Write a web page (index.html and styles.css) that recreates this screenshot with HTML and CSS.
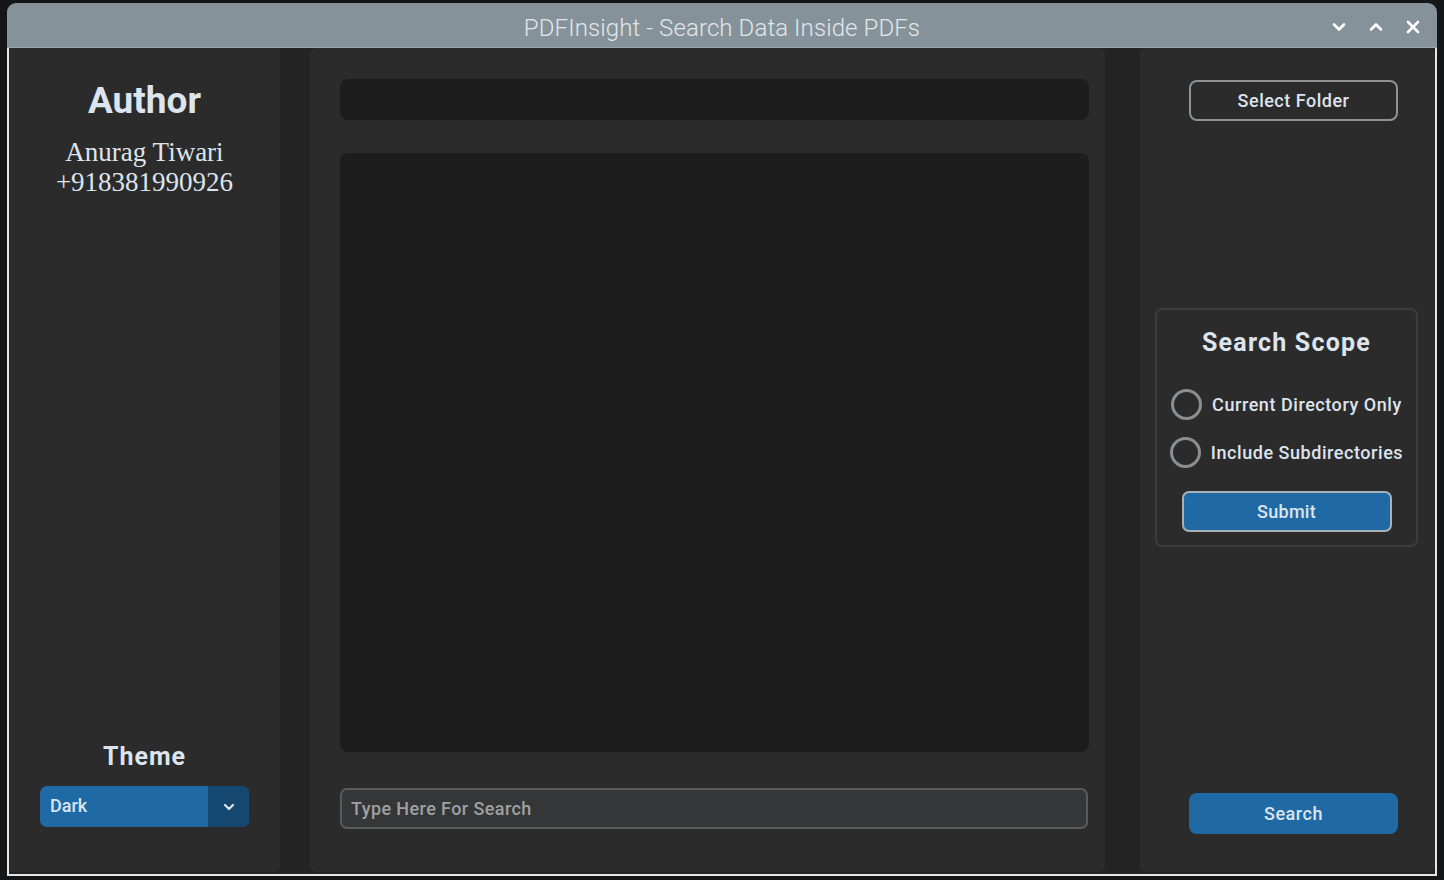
FILE: index.html
```html
<!DOCTYPE html>
<html lang="en">
<head>
<meta charset="utf-8">
<title>PDFInsight - Search Data Inside PDFs</title>
<link rel="stylesheet" href="styles.css">
</head>
<body>
<div class="window">
  <header class="titlebar">
    <div class="tb-side"></div>
    <div class="title">PDFInsight - Search Data Inside PDFs</div>
    <div class="tb-side controls">
      <svg class="ctl" width="14" height="14" viewBox="0 0 14 14"><path d="M2 4.5 L7 9.5 L12 4.5" fill="none" stroke="#fff" stroke-width="2.6" stroke-linecap="round" stroke-linejoin="round"/></svg>
      <svg class="ctl" width="14" height="14" viewBox="0 0 14 14"><path d="M2 9.5 L7 4.5 L12 9.5" fill="none" stroke="#fff" stroke-width="2.6" stroke-linecap="round" stroke-linejoin="round"/></svg>
      <svg class="ctl" width="14" height="14" viewBox="0 0 14 14"><path d="M2 2 L12 12 M12 2 L2 12" fill="none" stroke="#fff" stroke-width="2.6" stroke-linecap="round"/></svg>
    </div>
  </header>
  <div class="body">
    <aside class="frame sidebar">
      <div class="author">
        <div class="author-title">Author</div>
        <div class="author-name">Anurag Tiwari<br>+918381990926</div>
      </div>
      <div class="theme">
        <div class="theme-title">Theme</div>
        <div class="option-menu">
          <span class="option-value">Dark</span>
          <span class="option-arrow">
            <svg width="14" height="14" viewBox="0 0 14 14"><path d="M3 5 L7 9 L11 5" fill="none" stroke="#dce4ee" stroke-width="2.2" stroke-linecap="round" stroke-linejoin="round"/></svg>
          </span>
        </div>
      </div>
    </aside>
    <main class="frame center">
      <div class="path-entry"></div>
      <div class="textbox"></div>
      <div class="search-entry">Type Here For Search</div>
    </main>
    <aside class="frame right">
      <button class="btn-outline">Select Folder</button>
      <section class="scope">
        <div class="scope-title">Search Scope</div>
        <label class="radio"><span class="radio-dot"></span><span class="radio-label">Current Directory Only</span></label>
        <label class="radio radio-second"><span class="radio-dot"></span><span class="radio-label">Include Subdirectories</span></label>
        <button class="btn-submit">Submit</button>
      </section>
      <button class="btn-search">Search</button>
    </aside>
  </div>
</div>
</body>
</html>
```
FILE: styles.css
```css
* { box-sizing: border-box; }
html, body { margin: 0; padding: 0; }
body {
  width: 1444px;
  height: 880px;
  background: #151617;
  font-family: Roboto, "Liberation Sans", sans-serif;
  overflow: hidden;
}
.window {
  margin: 3px 0 0 7px;
  width: 1430px;
}
.titlebar {
  height: 45px;
  background: #86929a;
  border-radius: 9px 9px 0 0;
  display: grid;
  grid-template-columns: 1fr auto 1fr;
  align-items: center;
  border-bottom: 1px solid #9aa5ac;
}
.title {
  color: #e2e6e9;
  font-size: 24px;
  font-weight: 300;
  letter-spacing: 0.1px;
  padding-top: 5px;
}
.controls {
  display: flex;
  justify-content: flex-end;
  align-items: center;
  gap: 23px;
  padding-right: 17px;
  padding-top: 4px;
}
.ctl { display: block; }
.body {
  height: 828px;
  background: #232323;
  border: 2px solid #e6e6e6;
  border-top: none;
  display: flex;
  align-items: stretch;
}
.frame {
  background: #2b2b2b;
  border-radius: 0 0 6px 6px;
  margin-bottom: 2px;
}
.sidebar {
  width: 271px;
  border-radius: 0 0 6px 0;
  display: flex;
  flex-direction: column;
  justify-content: space-between;
  align-items: center;
  padding: 31px 0 45px;
}
.author { text-align: center; }
.author-title {
  color: #dce4ee;
  font-size: 37px;
  font-weight: 700;
  line-height: 44px;
}
.author-name {
  margin-top: 14px;
  color: #dce4ee;
  font-family: "Liberation Serif", "Times New Roman", serif;
  font-size: 27px;
  line-height: 30px;
}
.theme {
  display: flex;
  flex-direction: column;
  align-items: center;
}
.theme-title {
  color: #dce4ee;
  font-size: 25px;
  font-weight: 700;
  letter-spacing: 1px;
  line-height: 30px;
}
.option-menu {
  margin-top: 14px;
  width: 209px;
  height: 41px;
  border-radius: 7px;
  background: #1f6aa5;
  display: flex;
  overflow: hidden;
}
.option-value {
  flex: 1;
  color: #dce4ee;
  font-size: 18px;
  font-weight: 500;
  padding-left: 10px;
  line-height: 40px;
}
.option-arrow {
  width: 41px;
  background: #144870;
  display: flex;
  align-items: center;
  justify-content: center;
}
.center {
  width: 795px;
  margin-left: 30px;
  border-radius: 6px;
  padding: 31px 16px 0 30px;
  display: flex;
  flex-direction: column;
}
.path-entry {
  height: 41px;
  background: #1d1d1d;
  border-radius: 8px;
}
.textbox {
  margin-top: 33px;
  height: 599px;
  background: #1d1d1d;
  border-radius: 8px;
}
.search-entry {
  margin-top: 36px;
  height: 41px;
  width: 748px;
  background: #343638;
  border: 2px solid #565b5e;
  border-radius: 7px;
  color: #9ea0a2;
  font-size: 18px;
  font-weight: 500;
  letter-spacing: 0.4px;
  line-height: 37px;
  padding-left: 9px;
}
.right {
  width: 295px;
  margin-left: 35px;
  border-radius: 6px;
  display: flex;
  flex-direction: column;
  align-items: flex-start;
}
button {
  font-family: Roboto, "Liberation Sans", sans-serif;
  cursor: pointer;
}
.btn-outline {
  margin: 32px 0 0 49px;
  width: 209px;
  height: 41px;
  border: 2px solid #8f9396;
  border-radius: 8px;
  background: transparent;
  color: #dce4ee;
  font-size: 18px;
  font-weight: 500;
  letter-spacing: 0.5px;
  padding: 0;
}
.scope {
  margin: 187px 0 0 15px;
  width: 263px;
  height: 239px;
  border: 2px solid #3c3c3c;
  border-radius: 7px;
  display: flex;
  flex-direction: column;
  align-items: center;
  padding-top: 18px;
}
.scope-title {
  color: #dce4ee;
  font-size: 25px;
  font-weight: 700;
  letter-spacing: 1.2px;
  line-height: 30px;
}
.radio {
  display: inline-flex;
  align-items: center;
  margin-top: 31px;
}
.radio-second { margin-top: 17px; }
.radio-dot {
  width: 31px;
  height: 31px;
  border: 3px solid #8c8f91;
  border-radius: 50%;
  flex: none;
}
.radio-label {
  margin-left: 10px;
  color: #dce4ee;
  font-size: 18px;
  font-weight: 500;
  letter-spacing: 0.55px;
}
.btn-submit {
  margin-top: 23px;
  width: 210px;
  height: 41px;
  background: #1f6aa5;
  border: 2px solid #a7b1b8;
  border-radius: 7px;
  color: #dce4ee;
  font-size: 18px;
  font-weight: 500;
  letter-spacing: 0.3px;
  padding: 0;
}
.btn-search {
  margin: 246px 0 0 49px;
  width: 209px;
  height: 41px;
  background: #1f6aa5;
  border: none;
  border-radius: 8px;
  color: #dce4ee;
  font-size: 18px;
  font-weight: 500;
  letter-spacing: 0.5px;
  padding: 0;
}
```
